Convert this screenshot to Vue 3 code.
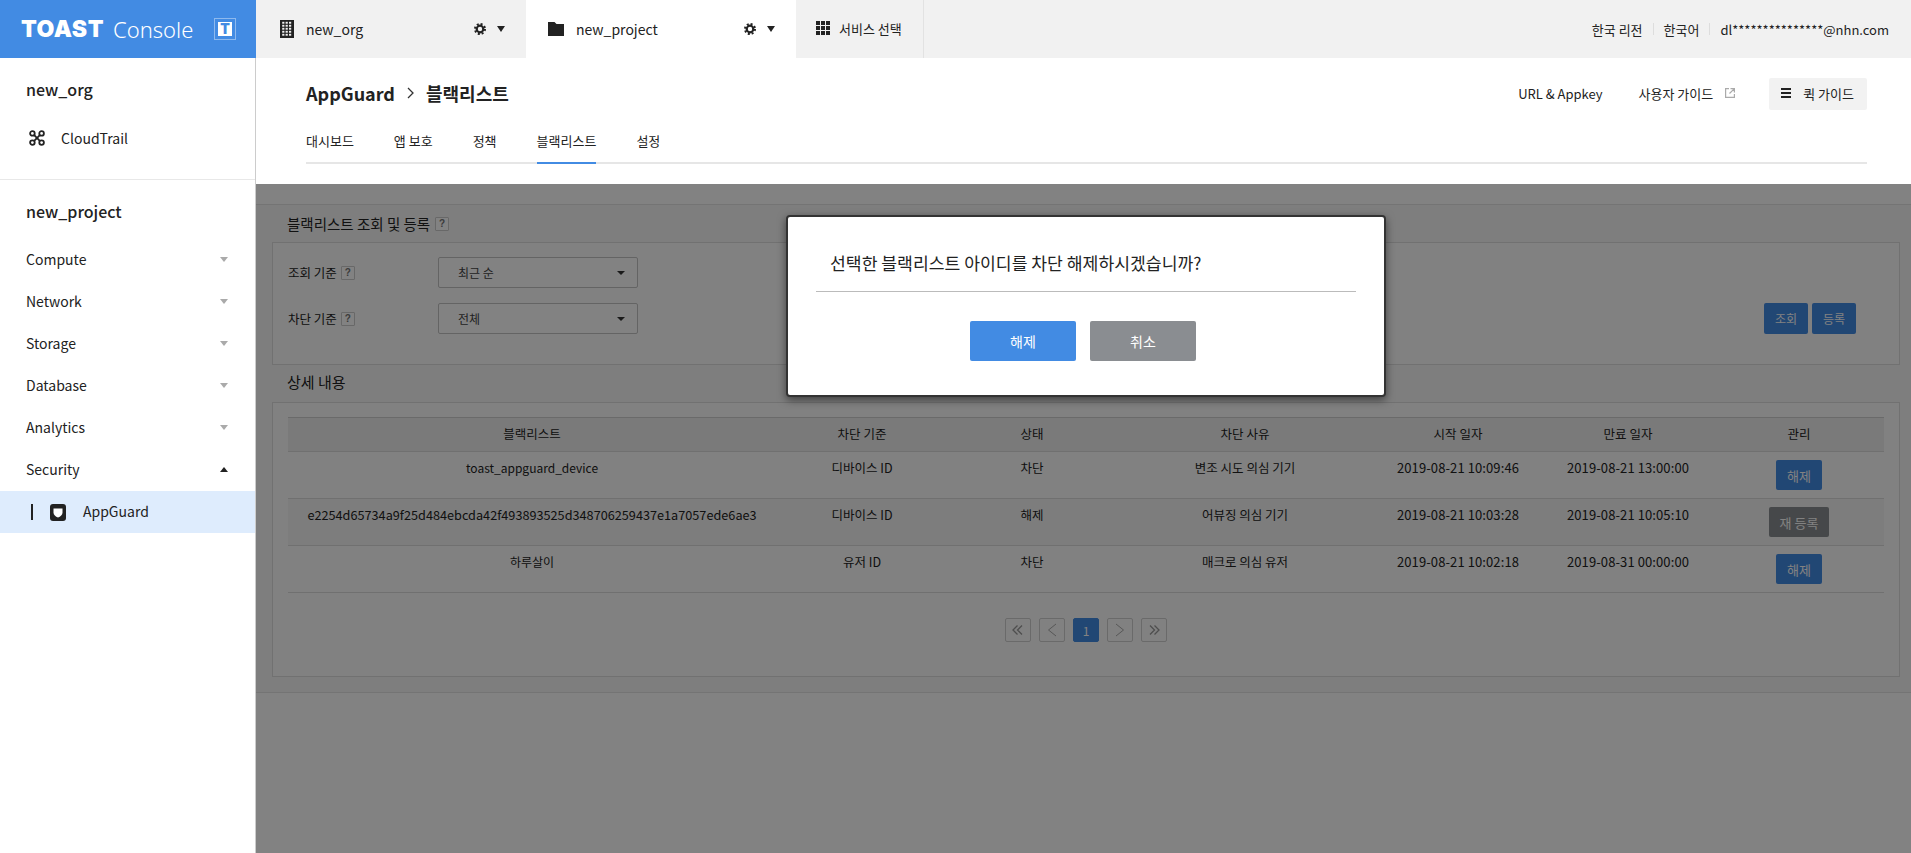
<template>
  <div class="app">
    <header class="topbar">
      <div class="brand">
        <span class="wordmark">TOAST</span>
        <span class="console">Console</span>
        <span class="mark"><span class="mark-inner">T</span></span>
      </div>
      <div class="ctx-tab">
        <svg class="ic-org" width="14" height="18" viewBox="0 0 14 18">
          <rect width="14" height="18" fill="#222" />
          <g fill="#f1f1f1">
            <template v-for="r in 5" :key="r">
              <rect v-for="c in 3" :key="c" :x="2.2 + (c - 1) * 3.4" :y="1.8 + (r - 1) * 3" width="2.2" height="1.9" />
            </template>
          </g>
        </svg>
        <span class="ctx-name">new_org</span>
        <svg class="ic-gear" width="12" height="12" viewBox="0 0 12 12">
          <circle cx="6" cy="6" r="3.3" fill="none" stroke="#222" stroke-width="2.2" />
          <circle cx="6" cy="6" r="5" fill="none" stroke="#222" stroke-width="2" stroke-dasharray="2 1.93" />
        </svg>
        <i class="caret"></i>
      </div>
      <div class="ctx-tab current">
        <svg class="ic-folder" width="16" height="14" viewBox="0 0 16 14">
          <path d="M0 0h6.500l2 2H16v12H0z" fill="#222" />
        </svg>
        <span class="ctx-name">new_project</span>
        <svg class="ic-gear" width="12" height="12" viewBox="0 0 12 12">
          <circle cx="6" cy="6" r="3.3" fill="none" stroke="#222" stroke-width="2.2" />
          <circle cx="6" cy="6" r="5" fill="none" stroke="#222" stroke-width="2" stroke-dasharray="2 1.93" />
        </svg>
        <i class="caret"></i>
      </div>
      <div class="service-tab">
        <svg width="14" height="14" viewBox="0 0 14 14" fill="#222">
          <template v-for="r in 3" :key="r">
            <rect v-for="c in 3" :key="c" :x="(c - 1) * 5" :y="(r - 1) * 5" width="4" height="4" />
          </template>
        </svg>
        <span>서비스 선택</span>
      </div>
      <div class="account">
        <span>한국 리전</span>
        <i class="sep"></i>
        <span>한국어</span>
        <i class="sep"></i>
        <span>dl***************@nhn.com</span>
      </div>
    </header>

    <div class="body">
      <aside class="sidebar">
        <div class="org-block">
          <div class="side-title">new_org</div>
          <div class="cloudtrail">
            <svg width="16" height="16" viewBox="0 0 16 16" fill="none" stroke="#222" stroke-width="1.800">
              <circle cx="3.400" cy="3.400" r="2.300" />
              <circle cx="12.600" cy="3.400" r="2.300" />
              <circle cx="3.400" cy="12.600" r="2.300" />
              <circle cx="12.600" cy="12.600" r="2.300" />
              <path d="M5.200 5.200l5.600 5.600M10.800 5.200l-5.600 5.600" />
            </svg>
            <span>CloudTrail</span>
          </div>
        </div>
        <div class="project-block">
          <div class="side-title">new_project</div>
          <div v-for="item in menu" :key="item.label" class="menu-item">
            <span>{{ item.label }}</span>
            <i :class="item.open ? 'tri-up' : 'tri-down'"></i>
          </div>
          <div class="menu-active">
            <i class="active-bar"></i>
            <svg width="16" height="17" viewBox="0 0 16 17">
              <rect width="16" height="17" rx="3" fill="#222" />
              <path d="M3.500 4.500h9v4.200c0 2.200-2 3.800-4.500 4.800-2.500-1-4.500-2.600-4.500-4.800z" fill="#fff" />
            </svg>
            <span>AppGuard</span>
          </div>
        </div>
      </aside>

      <main class="main">
        <section class="page-head">
          <div class="head-row">
            <div class="crumbs">
              <strong>AppGuard</strong>
              <svg width="7" height="12" viewBox="0 0 7 12" fill="none" stroke="#333" stroke-width="1.300">
                <path d="M1 1l5 5-5 5" />
              </svg>
              <strong>블랙리스트</strong>
            </div>
            <div class="head-links">
              <span>URL &amp; Appkey</span>
              <span class="guide-link">
                사용자 가이드
                <svg width="10" height="10" viewBox="0 0 10 10" fill="none" stroke="#aaa" stroke-width="1.200">
                  <path d="M4 .6H.6v8.800h8.800V6M5.500.6h3.900v3.900M9.400.6L4.500 5.500" />
                </svg>
              </span>
              <span class="quick-guide">
                <svg width="10" height="10" viewBox="0 0 10 10" fill="#222">
                  <rect width="10" height="2" />
                  <rect y="4" width="10" height="2" />
                  <rect y="8" width="10" height="2" />
                </svg>
                퀵 가이드
              </span>
            </div>
          </div>
          <nav class="page-tabs">
            <span v-for="tab in tabs" :key="tab" class="page-tab" :class="{ on: tab === '블랙리스트' }">{{ tab }}</span>
          </nav>
        </section>

        <section class="stage">
          <div class="content">
            <h3 class="section-title">블랙리스트 조회 및 등록 <i class="help">?</i></h3>
            <div class="panel search-panel">
              <div class="form">
                <div v-for="f in filters" :key="f.label" class="form-row">
                  <label>{{ f.label }} <i class="help">?</i></label>
                  <div class="select">
                    <span>{{ f.value }}</span>
                    <i class="select-caret"></i>
                  </div>
                </div>
              </div>
              <div class="actions">
                <button class="btn blue">조회</button>
                <button class="btn blue">등록</button>
              </div>
            </div>

            <h3 class="section-title second">상세 내용</h3>
            <div class="panel table-panel">
              <div class="grid head">
                <div v-for="h in headers" :key="h">{{ h }}</div>
              </div>
              <div v-for="(row, i) in rows" :key="row.id" class="grid row" :class="{ alt: i === 1 }">
                <div :class="row.id.length > 40 ? 'cell-hash' : 'cell-id'">{{ row.id }}</div>
                <div>{{ row.basis }}</div>
                <div>{{ row.status }}</div>
                <div>{{ row.reason }}</div>
                <div class="cell-date">{{ row.start }}</div>
                <div class="cell-date">{{ row.end }}</div>
                <div>
                  <button class="btn row-btn" :class="row.status === '해제' ? 'dark' : 'blue'">
                    {{ row.status === '해제' ? '재 등록' : '해제' }}
                  </button>
                </div>
              </div>
              <div class="pager">
                <span class="page-btn">
                  <svg width="12" height="10" viewBox="0 0 12 10" fill="none" stroke="#999" stroke-width="1.300">
                    <path d="M5.500.5L1 5l4.500 4.500M10 .5L5.500 5l4.500 4.500" />
                  </svg>
                </span>
                <span class="page-btn">
                  <svg width="10" height="14" viewBox="0 0 10 14" fill="none" stroke="#aaa" stroke-width="1">
                    <path d="M9 1L1.500 7 9 13" />
                  </svg>
                </span>
                <span class="page-btn active">1</span>
                <span class="page-btn">
                  <svg width="10" height="14" viewBox="0 0 10 14" fill="none" stroke="#aaa" stroke-width="1">
                    <path d="M1 1l7.500 6L1 13" />
                  </svg>
                </span>
                <span class="page-btn">
                  <svg width="12" height="10" viewBox="0 0 12 10" fill="none" stroke="#999" stroke-width="1.300">
                    <path d="M2 .5L6.500 5 2 9.500M6.500.5L11 5l-4.500 4.500" />
                  </svg>
                </span>
              </div>
            </div>
          </div>

          <div class="overlay">
            <div class="modal">
              <p class="modal-text">선택한 블랙리스트 아이디를 차단 해제하시겠습니까?</p>
              <div class="modal-actions">
                <button class="modal-btn ok">해제</button>
                <button class="modal-btn cancel">취소</button>
              </div>
            </div>
          </div>
        </section>
      </main>
    </div>
  </div>
</template>

<script setup>
const menu = [
  { label: 'Compute' },
  { label: 'Network' },
  { label: 'Storage' },
  { label: 'Database' },
  { label: 'Analytics' },
  { label: 'Security', open: true },
]

const tabs = ['대시보드', '앱 보호', '정책', '블랙리스트', '설정']

const filters = [
  { label: '조회 기준', value: '최근 순' },
  { label: '차단 기준', value: '전체' },
]

const headers = ['블랙리스트', '차단 기준', '상태', '차단 사유', '시작 일자', '만료 일자', '관리']

const rows = [
  {
    id: 'toast_appguard_device',
    basis: '디바이스 ID',
    status: '차단',
    reason: '변조 시도 의심 기기',
    start: '2019-08-21 10:09:46',
    end: '2019-08-21 13:00:00',
  },
  {
    id: 'e2254d65734a9f25d484ebcda42f493893525d348706259437e1a7057ede6ae3',
    basis: '디바이스 ID',
    status: '해제',
    reason: '어뷰징 의심 기기',
    start: '2019-08-21 10:03:28',
    end: '2019-08-21 10:05:10',
  },
  {
    id: '하루살이',
    basis: '유저 ID',
    status: '차단',
    reason: '매크로 의심 유저',
    start: '2019-08-21 10:02:18',
    end: '2019-08-31 00:00:00',
  },
]
</script>

<style>
html,
body {
  margin: 0;
  height: 100%;
  overflow: hidden;
}
</style>

<style scoped>
.app {
  display: flex;
  flex-direction: column;
  height: 853px;
  font-family: "Noto Sans CJK KR", "Noto Sans", sans-serif;
  font-size: 13px;
  color: #222;
}

/* top bar */
.topbar {
  display: flex;
  height: 58px;
  flex: none;
  background: #f1f1f1;
}
.brand {
  width: 256px;
  flex: none;
  display: flex;
  align-items: center;
  padding-left: 21px;
  box-sizing: border-box;
  background: #428be3;
  color: #fff;
}
.wordmark {
  width: 87px;
  font-family: Inter, sans-serif;
  font-size: 23px;
  font-weight: 900;
  letter-spacing: 0.5px;
  line-height: 1;
}
.console {
  margin-left: 5px;
  width: 101px;
  font-family: "Noto Sans", sans-serif;
  font-size: 22px;
  font-weight: 300;
  line-height: 1;
}
.mark {
  width: 22px;
  height: 22px;
  box-sizing: border-box;
  border: 1px solid rgba(255, 255, 255, 0.4);
  padding: 3px;
}
.mark-inner {
  display: block;
  height: 14px;
  background: #fff;
  color: #428be3;
  font-family: Inter, sans-serif;
  font-size: 14px;
  font-weight: 900;
  line-height: 14px;
  text-align: center;
}
.ctx-tab {
  width: 270px;
  flex: none;
  display: flex;
  align-items: center;
  box-sizing: border-box;
  padding-left: 24px;
  font-size: 14px;
}
.ctx-tab.current {
  background: #fff;
  padding-left: 22px;
}
.ctx-name {
  width: 168px;
  margin-left: 12px;
}
.caret {
  margin-left: 11px;
  border-left: 4.5px solid transparent;
  border-right: 4.5px solid transparent;
  border-top: 6px solid #222;
}
.service-tab {
  width: 128px;
  flex: none;
  display: flex;
  align-items: center;
  gap: 9px;
  box-sizing: border-box;
  padding-left: 20px;
  padding-bottom: 2px;
  border-right: 1px solid #e2e2e2;
}
.account {
  margin-left: auto;
  display: flex;
  align-items: center;
  gap: 10px;
  padding-right: 22px;
}
.sep {
  width: 1px;
  height: 12px;
  background: #ddd;
}

/* sidebar */
.body {
  flex: 1;
  display: flex;
  min-height: 0;
}
.sidebar {
  width: 256px;
  flex: none;
  box-sizing: border-box;
  border-right: 1px solid #ccc;
  background: #fff;
}
.org-block {
  height: 122px;
  box-sizing: border-box;
  padding: 19px 0 0 26px;
  border-bottom: 1px solid #e8e8e8;
}
.side-title {
  height: 24px;
  font-size: 16px;
  font-weight: 500;
  line-height: 24px;
}
.cloudtrail {
  display: flex;
  align-items: center;
  gap: 16px;
  margin-top: 27px;
  padding-left: 3px;
  font-size: 14px;
}
.project-block {
  padding-top: 19px;
}
.project-block .side-title {
  margin: 0 0 16px 26px;
}
.menu-item {
  height: 42px;
  box-sizing: border-box;
  display: flex;
  align-items: center;
  justify-content: space-between;
  padding: 0 27px 2px 26px;
  font-size: 14px;
}
.tri-down {
  border-left: 4px solid transparent;
  border-right: 4px solid transparent;
  border-top: 5px solid #aaa;
}
.tri-up {
  border-left: 4px solid transparent;
  border-right: 4px solid transparent;
  border-bottom: 5px solid #222;
}
.menu-active {
  height: 42px;
  display: flex;
  align-items: center;
  background: #deecfd;
  padding-left: 31px;
  font-size: 14px;
}
.active-bar {
  width: 2px;
  height: 16px;
  background: #222;
  margin-right: 17px;
}
.menu-active span {
  margin: 0 0 2px 17px;
}

/* page head */
.main {
  flex: 1;
  min-width: 0;
  display: flex;
  flex-direction: column;
}
.page-head {
  height: 126px;
  flex: none;
  box-sizing: border-box;
  padding: 20px 44px 0 50px;
}
.head-row {
  display: flex;
  align-items: center;
  justify-content: space-between;
  height: 32px;
}
.crumbs {
  display: flex;
  align-items: center;
  gap: 12px;
  padding-bottom: 2px;
  font-size: 18px;
}
.crumbs strong {
  font-weight: 700;
}
.head-links {
  display: flex;
  align-items: center;
}
.guide-link {
  display: flex;
  align-items: center;
  gap: 12px;
  margin-left: 36px;
  padding-bottom: 2px;
}
.head-links > span:first-child {
  padding-bottom: 2px;
}
.quick-guide {
  display: flex;
  align-items: center;
  gap: 12px;
  height: 32px;
  box-sizing: border-box;
  margin-left: 34px;
  padding: 0 13px 2px 12px;
  background: #f2f2f2;
  border-radius: 2px;
}
.page-tabs {
  display: flex;
  gap: 40px;
  height: 44px;
  margin-top: 10px;
  box-sizing: border-box;
  border-bottom: 2px solid #e6e6e6;
}
.page-tab {
  height: 44px;
  box-sizing: border-box;
  padding-top: 11px;
  line-height: 20px;
}
.page-tab.on {
  border-bottom: 2px solid #428be3;
}

/* blacklist content under the dim layer */
.stage {
  position: relative;
  flex: 1;
  min-height: 0;
  background: #fff;
  padding-top: 20px;
}
.content {
  height: 489px;
  box-sizing: border-box;
  padding: 0 11px 0 16px;
  background: #f8f8f8;
  border-top: 1px solid #e4e4e4;
  border-bottom: 1px solid #e4e4e4;
}
.section-title {
  display: flex;
  align-items: center;
  gap: 5px;
  height: 37px;
  margin: 0 0 0 15px;
  font-size: 14.500px;
  font-weight: 400;
  color: #222;
}
.section-title.second {
  font-size: 15px;
  padding-bottom: 4px;
  box-sizing: border-box;
}
.panel {
  border: 1px solid #dedede;
  background: #fdfdfd;
}
.search-panel {
  display: flex;
  justify-content: space-between;
  align-items: flex-end;
  height: 123px;
  box-sizing: border-box;
  padding: 15px 43px 30px 15px;
}
.form {
  display: flex;
  flex-direction: column;
  gap: 15px;
}
.form-row {
  display: flex;
  align-items: center;
}
.form-row label {
  width: 150px;
  display: flex;
  align-items: center;
  gap: 4px;
  font-size: 12.500px;
}
.help {
  display: inline-block;
  width: 12px;
  height: 12px;
  border: 1px solid #ccc;
  border-radius: 1px;
  background: #fff;
  color: #777;
  font-family: "Liberation Sans", sans-serif;
  font-size: 10px;
  font-style: normal;
  font-weight: 700;
  line-height: 12px;
  text-align: center;
}
.select {
  width: 200px;
  height: 31px;
  box-sizing: border-box;
  display: flex;
  align-items: center;
  justify-content: space-between;
  padding: 0 12px 0 19px;
  border: 1px solid #c4c4c4;
  border-radius: 2px;
  background: #fff;
  font-size: 12px;
  color: #444;
}
.select-caret {
  border-left: 4px solid transparent;
  border-right: 4px solid transparent;
  border-top: 4px solid #333;
}
.actions {
  display: flex;
  gap: 4px;
}
.btn {
  height: 30px;
  padding: 0 11px;
  border: 0;
  border-radius: 2px;
  font-family: inherit;
  font-size: 13px;
  color: #fff;
}
.btn.blue {
  background: #428be3;
}
.btn.dark {
  background: #8a8d91;
}
.actions .btn {
  width: 44px;
  height: 31px;
  padding: 0;
  font-size: 12px;
}
.row-btn {
  display: block;
  margin: 1px auto 0;
}
.table-panel {
  height: 275px;
  box-sizing: border-box;
  padding: 14px 15px 0;
}
.grid {
  display: grid;
  grid-template-columns: 488px 172px 168px 258px 168px 172px 170px;
  text-align: center;
  font-size: 12.500px;
  color: #222;
}
.grid.head {
  height: 35px;
  box-sizing: border-box;
  align-items: center;
  padding-bottom: 2px;
  background: #f0f0f0;
  border-top: 1px solid #d0d0d0;
  border-bottom: 1px solid #dcdcdc;
}
.grid.row {
  height: 47px;
  box-sizing: border-box;
  padding-top: 7px;
  line-height: 18px;
  border-bottom: 1px solid #dcdcdc;
}
.grid.row.alt {
  background: #f6f6f6;
}
.cell-id {
  font-size: 12px;
}
.cell-hash {
  font-size: 12.700px;
}
.cell-date {
  font-size: 13px;
  letter-spacing: 0.1px;
}
.pager {
  display: flex;
  justify-content: center;
  gap: 8px;
  margin-top: 25px;
}
.page-btn {
  width: 26px;
  height: 24px;
  box-sizing: border-box;
  display: flex;
  align-items: center;
  justify-content: center;
  border: 1px solid #d0d0d0;
  border-radius: 2px;
  color: #fff;
  font-size: 12px;
}
.page-btn.active {
  background: #428be3;
  border-color: #428be3;
}

/* dim layer + confirm dialog */
.overlay {
  position: absolute;
  inset: 0;
  background: rgba(0, 0, 0, 0.49);
}
.modal {
  position: absolute;
  left: 530px;
  top: 31px;
  width: 600px;
  height: 182px;
  box-sizing: border-box;
  border: 2px solid #333;
  border-radius: 4px;
  background: #fff;
  box-shadow: 0 3px 9px rgba(0, 0, 0, 0.5);
  padding: 0 28px;
}
.modal-text {
  margin: 0;
  height: 75px;
  box-sizing: border-box;
  padding: 33px 0 0 14px;
  border-bottom: 1px solid #bbb;
  font-size: 17.200px;
  line-height: 26px;
  color: #222;
}
.modal-actions {
  display: flex;
  justify-content: center;
  gap: 14px;
  margin-top: 29px;
  padding-right: 6px;
}
.modal-btn {
  width: 106px;
  height: 40px;
  border: 0;
  border-radius: 2px;
  font-family: inherit;
  font-size: 14px;
  color: #fff;
}
.modal-btn.ok {
  background: #428be3;
}
.modal-btn.cancel {
  background: #8a8d91;
}
</style>
